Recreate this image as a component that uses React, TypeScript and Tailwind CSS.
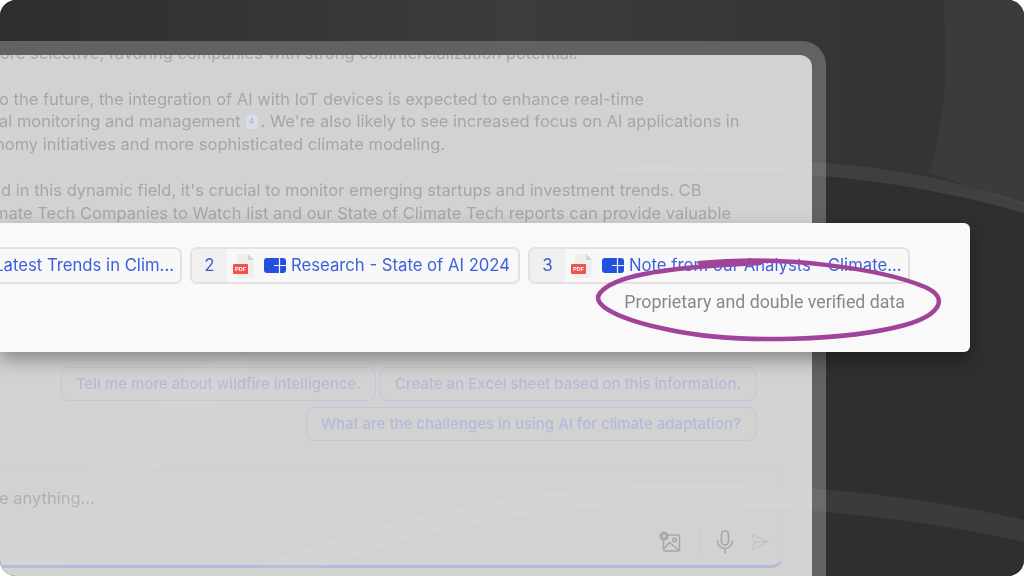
import React from 'react';

const inter = "font-['Inter',sans-serif]";

const PdfIcon = () => (
  <svg width="22" height="26" viewBox="0 0 22 26" className="shrink-0">
    <path d="M4 1h11l6 6v18H4z" fill="#efefed" />
    <path d="M15 1l6 6h-6z" fill="#d4d4d2" />
    <rect x="0" y="11" width="15" height="10" rx="1" fill="#ef5350" />
    <text x="7.5" y="18" textAnchor="middle" fontSize="5.5" fontWeight="700" fill="#fff" fontFamily="Liberation Sans, sans-serif">PDF</text>
  </svg>
);

const BrandLogo = () => (
  <svg width="22" height="15" viewBox="0 0 22 15" className="shrink-0">
    <rect width="22" height="15" rx="3" fill="#2450e0" />
    <path d="M10 7.500H22M15.500 0V15" stroke="#f8f8f8" strokeWidth="1.200" />
  </svg>
);

const SourceChip = ({ num, title, width }: { num?: string; title: string; width: string }) => (
  <div className={`flex h-[37px] shrink-0 items-center overflow-hidden rounded-[7px] border-2 border-[#e2e2e2] bg-[#f8f8f8] text-[16.700px] text-[#3f60d8] ${width}`}>
    {num && (
      <>
        <div className="flex h-full w-[35px] shrink-0 items-center justify-center bg-[#f0f0f0] text-[17px]">{num}</div>
        <div className="ml-[6px] mr-[9px]"><PdfIcon /></div>
        <div className="mr-[5px]"><BrandLogo /></div>
      </>
    )}
    <span className="whitespace-nowrap">{title}</span>
  </div>
);

const Suggestion = ({ children }: { children: React.ReactNode }) => (
  <div className="flex h-[34px] items-center rounded-[7px] border-[1.500px] border-[#bfc7e0] px-[14px] text-[15px] font-medium whitespace-nowrap text-[#b3bbd8]">
    {children}
  </div>
);

export default function App() {
  return (
    <div className={`h-[577px] w-[1024px] overflow-hidden bg-white blur-[0.4px] ${inter}`}>
      <div className="relative h-[576px] overflow-hidden rounded-2xl bg-[#363636] pt-[41px] pr-[198px]">
        {/* background shapes */}
        <svg className="absolute inset-0" width="1024" height="576" viewBox="0 0 1024 576">
          <defs>
            <linearGradient id="top" x1="0" y1="0" x2="1" y2="0">
              <stop offset="0" stopColor="#2e2e2e" />
              <stop offset="0.5" stopColor="#3c3c3c" />
              <stop offset="0.85" stopColor="#343434" />
            </linearGradient>
          </defs>
          <rect width="1024" height="190" fill="url(#top)" />
          <path d="M943 0h81v205l-94-32q22-80 13-173z" fill="#3b3b3b" />
          <path d="M540 178Q820 153 1024 213V576H540z" fill="#2f2f2f" />
        </svg>

        {/* app window */}
        <div className="relative h-full rounded-tr-[24px] bg-[#626262] pt-[14px] pr-[14px]">
          <div className="flex h-full flex-col overflow-hidden rounded-tr-[12px] bg-[#d2d2d2]">
            <div className="-mt-[13px] h-[183px] shrink-0 text-[16.500px] leading-[23px] whitespace-nowrap text-[#a6a6a6]">
              <div>ore selective, favoring companies with strong commercialization potential.</div>
              <div className="mt-[23px] -ml-[1px]">o the future, the integration of AI with IoT devices is expected to enhance real-time</div>
              <div className="-mt-[1px] -ml-[1px] flex items-center">
                al monitoring and management
                <span className="mr-[3px] ml-[5px] flex h-[14px] w-[12px] items-center justify-center rounded-[3px] bg-[#dadde8] text-[8px] text-[#a8b2d8]">4</span>
                <span className="whitespace-pre">. We're also likely to see increased focus on AI applications in</span>
              </div>
              <div className="-ml-[5px]">nomy initiatives and more sophisticated climate modeling.</div>
              <div className="mt-[23px] ml-[1px]">d in this dynamic field, it's crucial to monitor emerging startups and investment trends. CB</div>
              <div className="-ml-[6px]">mate Tech Companies to Watch list and our State of Climate Tech reports can provide valuable</div>
            </div>

            <div className="mt-[142px] flex flex-col items-end gap-[6px] pr-[56px]">
              <div className="flex gap-[4px]">
                <Suggestion>Tell me more about wildfire intelligence.</Suggestion>
                <Suggestion>Create an Excel sheet based on this information.</Suggestion>
              </div>
              <Suggestion>What are the challenges in using AI for climate adaptation?</Suggestion>
            </div>

            <div className="mt-[28px] mr-[29px] flex h-[99px] shrink-0 flex-col justify-between rounded-tr-[12px] rounded-br-[12px] border-t border-r border-b-[3px] border-t-[#cecece] border-r-[#cecece] border-b-[#b2badb] pt-[16px] pb-[10px]">
              <div className="-ml-[1px] text-[16.500px] leading-[24px] text-[#b0b0b0]">e anything...</div>
              <div className="flex items-center justify-end pr-[13px] text-[#a6a6a6]">
                <svg width="22" height="22" viewBox="0 0 22 22" fill="none" stroke="currentColor" strokeWidth="1.500">
                  <path d="M9 4h10a1.500 1.500 0 0 1 1.500 1.500v13a1.500 1.500 0 0 1-1.500 1.500H6a1.500 1.500 0 0 1-1.500-1.500V10" />
                  <path d="M4.500 18l6-6.500 9.500 8" />
                  <circle cx="15.500" cy="9" r="1.800" />
                  <circle cx="5" cy="5" r="4.500" fill="#a6a6a6" stroke="none" />
                  <path d="M5 2.800v4.400M2.800 5h4.400" stroke="#d2d2d2" strokeWidth="1.200" />
                </svg>
                <div className="mr-[16px] ml-[18px] h-[26px] w-px bg-[#c8c8c8]" />
                <svg width="18" height="24" viewBox="0 0 18 24" fill="none" stroke="currentColor" strokeWidth="1.600" strokeLinecap="round" className="mr-[17px]">
                  <rect x="5.500" y="1" width="7" height="14" rx="3.500" />
                  <path d="M1.500 11a7.500 7.500 0 0 0 15 0M9 18.500V23" />
                </svg>
                <svg width="18" height="18" viewBox="0 0 18 18" fill="none" stroke="#c4c4c4" strokeWidth="1.300" strokeLinejoin="round">
                  <path d="M1.500 1.500L17 9 1.500 16.500 3.500 9zM3.500 9H17" />
                </svg>
              </div>
            </div>
          </div>
        </div>

        {/* light swooshes over the window */}
        <svg className="pointer-events-none absolute inset-0" width="1024" height="576" viewBox="0 0 1024 576" fill="none">
          <path d="M540 178Q820 132 1024 203V213Q820 153 540 178z" fill="#fff" fillOpacity="0.06" />
          <path d="M230 576Q450 490 660 484Q860 482 1024 520V542Q860 505 660 505Q480 505 300 576z" fill="#fff" fillOpacity="0.06" />
          <path d="M0 556L200 365L262 352L60 576H0z" fill="#fff" fillOpacity="0.05" />
        </svg>

        {/* floating sources card */}
        <div className="absolute top-[223px] left-0 flex h-[129px] w-[970px] flex-col items-end overflow-hidden rounded-r-[6px] bg-[#f9f9f9] pt-[24px] pr-[60px] shadow-[0_8px_18px_rgba(0,0,0,0.35)]">
          <div className="flex shrink-0 justify-end gap-[8px]">
            <SourceChip title="Latest Trends in Clim..." width="pr-[6px]" />
            <SourceChip num="2" title="Research - State of AI 2024" width="w-[330px]" />
            <SourceChip num="3" title="Note from our Analysts - Climate..." width="w-[382px]" />
          </div>
          <div className="mt-[6px] pr-[5px] font-['Roboto',sans-serif] text-[17.800px] leading-[24px] text-[#888888]">
            Proprietary and double verified data
          </div>
        </div>

        {/* hand drawn highlight */}
        <svg className="absolute inset-0" width="1024" height="576" viewBox="0 0 1024 576" fill="none">
          <path
            d="M700 263C780 255 880 268 925 287C950 298 940 315 905 325C850 340 740 345 670 330C620 320 590 305 600 293C612 278 650 268 760 263"
            stroke="#a0439a"
            strokeWidth="4.500"
            strokeLinecap="round"
          />
        </svg>
      </div>
    </div>
  );
}
